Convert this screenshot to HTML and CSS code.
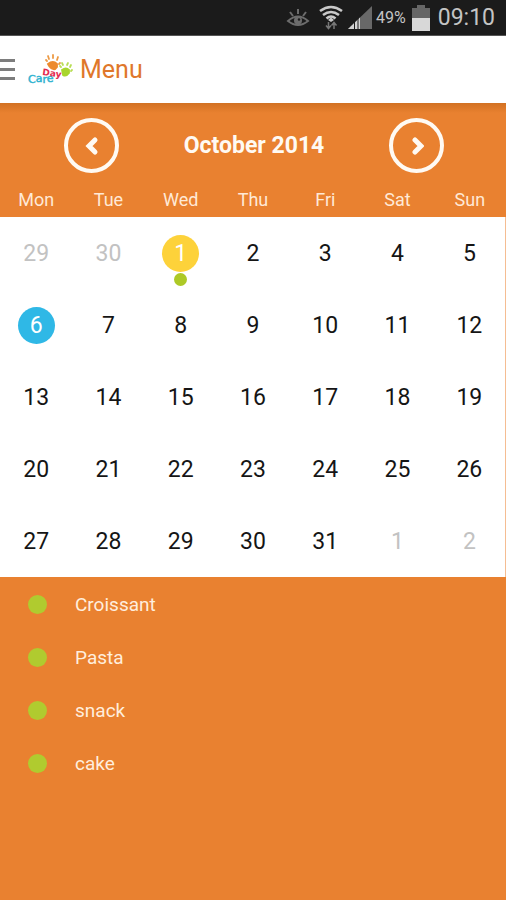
FILE: index.html
```html
<!DOCTYPE html>
<html lang="en">
<head>
<meta charset="utf-8">
<meta name="viewport" content="width=device-width, initial-scale=1">
<title>Menu</title>
<link rel="stylesheet" href="styles.css">
</head>
<body>
<div class="status">
  <svg class="status-eye" width="24" height="20" viewBox="0 0 24 20" fill="none" stroke="#6c6c6c" stroke-width="2">
    <path d="M2 13Q12 4 22 13Q12 21 2 13Z"/><circle cx="12" cy="12.500" r="4" fill="#6c6c6c" stroke="none"/>
    <path d="M12 1v5M4 4l3 4M20 4l-3 4"/><circle cx="13" cy="11.500" r="1.200" fill="#1b1b1b" stroke="none"/>
  </svg>
  <svg class="status-wifi" width="24" height="26" viewBox="0 0 24 26" fill="none" stroke="#c9c9c9" stroke-width="2.600">
    <path d="M1 6Q12-2 23 6M4 10Q12 4 20 10M7.500 13.500Q12 9.500 16.500 13.500"/>
    <path d="M9 15L12 12.500l3 2.500-3 2z" fill="#c9c9c9" stroke="none"/>
    <path d="M9.500 17v6M7 20.500l2.500 3 2.500-3M15 24v-6M12.500 20.500l2.500-3 2.500 3" stroke="#777" stroke-width="1.500"/>
  </svg>
  <svg class="status-signal" width="24" height="24" viewBox="0 0 24 24">
    <path d="M0 23L24 0v23z" fill="#686868"/><path d="M0 23L12 11.500V23z" fill="#d2d2d2"/>
    <path d="M6.500 16v7M10 12v11" stroke="#1b1b1b"/>
  </svg>
  <span class="battery-text">49%</span>
  <svg class="status-battery" width="18" height="26" viewBox="0 0 18 26">
    <path d="M5 0h8v3h5v10H0V3h5z" fill="#666"/><path d="M0 13h18v13H0z" fill="#d8d8d8"/>
  </svg>
  <time class="clock">09:10</time>
</div>
<header class="header">
  <button class="menu-button" aria-label="Open navigation"><span class="menu-line"></span><span class="menu-line"></span><span class="menu-line"></span></button>
  <svg class="logo" width="46" height="34" viewBox="0 0 46 34" aria-label="Day Care">
    <g stroke="#ed9a45" stroke-width="1.800" stroke-linecap="round">
      <path d="M19 8l-1-1M21 6l-1-3M25 5V2M29 7l1-3M31 11l1-1"/>
      <path d="M20 11q5-4 9 0v3q-2 3-4 2-3-1-5-5z" fill="#ed8a2d" stroke="#ed8a2d"/>
    </g>
    <g stroke="#b9de55" stroke-width="1.800" stroke-linecap="round">
      <path d="M33 14l-1-1M35 12l-1-2M39 12l1-2M42 14l1-2M43 18l1-1"/>
      <path d="M34 17q4-3 7 0v3q-3 4-6 2z" fill="#a8d52e" stroke="#a8d52e"/>
    </g>
    <text class="logo-care" x="0" y="30"><tspan>C</tspan><tspan dy="-1">a</tspan><tspan dy="1">r</tspan><tspan dy="-1">e</tspan></text>
    <text class="logo-day" x="14" y="22" transform="rotate(8 14 22)">Day</text>
  </svg>
  <h1 class="title">Menu</h1>
</header>
<main class="content">
  <section class="calendar" aria-label="Calendar">
    <div class="month-bar">
      <button class="month-button" aria-label="Previous month"><svg width="14" height="20" viewBox="0 0 14 20"><path d="M10 4L4 10l6 6"/></svg></button>
      <h2 class="month">October 2014</h2>
      <button class="month-button" aria-label="Next month"><svg width="14" height="20" viewBox="0 0 14 20"><path d="M5 4l6 6-6 6"/></svg></button>
    </div>
    <table class="days">
      <thead><tr><th>Mon</th><th>Tue</th><th>Wed</th><th>Thu</th><th>Fri</th><th>Sat</th><th>Sun</th></tr></thead>
      <tbody>
        <tr><td class="outside">29</td><td class="outside">30</td><td><span class="day selected">1<span class="event"></span></span></td><td>2</td><td>3</td><td>4</td><td>5</td></tr>
        <tr><td><span class="day today">6</span></td><td>7</td><td>8</td><td>9</td><td>10</td><td>11</td><td>12</td></tr>
        <tr><td>13</td><td>14</td><td>15</td><td>16</td><td>17</td><td>18</td><td>19</td></tr>
        <tr><td>20</td><td>21</td><td>22</td><td>23</td><td>24</td><td>25</td><td>26</td></tr>
        <tr><td>27</td><td>28</td><td>29</td><td>30</td><td>31</td><td class="outside">1</td><td class="outside">2</td></tr>
      </tbody>
    </table>
  </section>
  <ul class="meals">
    <li class="meal">Croissant</li>
    <li class="meal">Pasta</li>
    <li class="meal">snack</li>
    <li class="meal">cake</li>
  </ul>
</main>
</body>
</html>
```
FILE: styles.css
```css
* { box-sizing: border-box; }
body {
  margin: 0;
  min-height: 100vh;
  display: flex;
  flex-direction: column;
  background: #e98130;
  color: #151515;
  font-family: Roboto, "Liberation Sans", sans-serif;
}
button { padding: 0; border: 0; background: none; cursor: pointer; }
h1, h2, ul { margin: 0; padding: 0; font-weight: 400; }

.status {
  display: flex;
  align-items: center;
  justify-content: flex-end;
  height: 36px;
  padding-right: 11px;
  background: #1b1b1b;
  border-bottom: 1px solid #555;
  color: #c4c4c4;
}
.status-wifi { margin-left: 9px; }
.status-signal { margin-left: 5px; }
.battery-text { margin: 0 6px 0 4px; font-size: 16px; }
.clock { margin-left: 8px; font-size: 23px; }

.header {
  display: flex;
  align-items: center;
  height: 67px;
  background: #fff;
}
.menu-button { display: flex; flex-direction: column; gap: 6px; width: 15px; }
.menu-line { height: 3px; background: #7d7d7d; }
.logo { margin-left: 13px; }
.logo text { font-family: "DejaVu Sans", sans-serif; }
.logo-day { font-size: 9px; font-weight: 700; fill: #e32b50; }
.logo-care { font-size: 11px; fill: #2fb3d0; stroke: #2fb3d0; stroke-width: 0.5px; }
.title { margin-left: 6px; font-size: 25px; color: #df772b; }

.content { flex: 1; background: linear-gradient(#d27122, #e98130 10px); }
.month-bar {
  display: flex;
  align-items: center;
  justify-content: space-between;
  height: 85px;
  padding: 0 62px 0 64px;
}
.month-button {
  display: flex;
  align-items: center;
  justify-content: center;
  width: 55px;
  height: 55px;
  border: 4px solid #fffaf3;
  border-radius: 50%;
}
.month-button path {
  fill: none;
  stroke: #fffaf3;
  stroke-width: 5;
  stroke-linecap: round;
}
.month { font-size: 23px; font-weight: 700; color: #fffaf3; }

.days {
  width: 100%;
  table-layout: fixed;
  border-collapse: separate;
  border-spacing: 0;
  text-align: center;
}
.days th {
  height: 29px;
  padding: 0 0 5px;
  font-size: 18px;
  line-height: 24px;
  font-weight: 400;
  color: #ffe9d6;
}
.days tbody { background: #fff; }
.days td { height: 72px; padding: 1px 0 0; font-size: 23px; line-height: 37px; }
.days td:last-child { border-right: 1px solid #f5bd92; }
.days .outside { color: #c2c2c2; }
.day {
  position: relative;
  display: block;
  width: 37px;
  height: 37px;
  margin: 0 auto;
  border-radius: 50%;
  color: #fff;
}
.selected { background: #fdd23a; }
.today { background: #2fb8e6; }
.event {
  position: absolute;
  top: 38px;
  left: 12px;
  width: 13px;
  height: 13px;
  border-radius: 50%;
  background: #adc926;
}

.meals { padding-top: 1px; list-style: none; }
.meal {
  display: flex;
  align-items: center;
  gap: 28px;
  height: 53px;
  padding-left: 28px;
  font-size: 19px;
  color: #ffeedd;
}
.meal::before {
  content: "";
  width: 19px;
  height: 19px;
  border-radius: 50%;
  background: #b0cb2f;
}
```
